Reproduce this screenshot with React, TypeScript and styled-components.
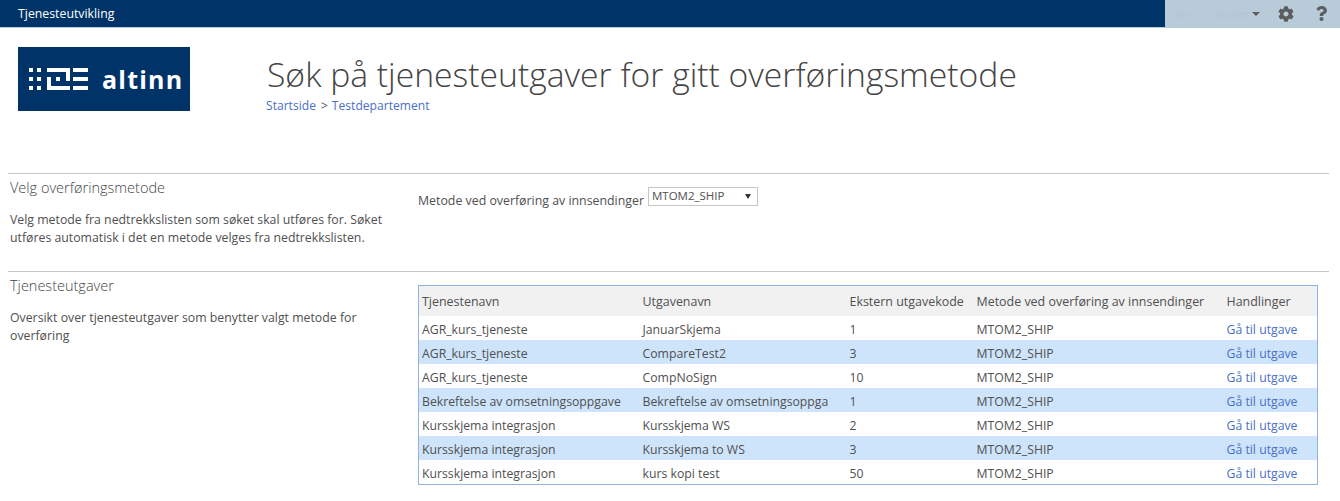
import React from 'react';
import styled, { createGlobalStyle } from 'styled-components';
import { FaCog, FaQuestion } from 'react-icons/fa';

const navy = '#003468';
const text = '#505050';
const link = '#4a6fc8';

interface Row {
  service: string;
  edition: string;
  code: string;
}

const rows: Row[] = [
  { service: 'AGR_kurs_tjeneste', edition: 'JanuarSkjema', code: '1' },
  { service: 'AGR_kurs_tjeneste', edition: 'CompareTest2', code: '3' },
  { service: 'AGR_kurs_tjeneste', edition: 'CompNoSign', code: '10' },
  { service: 'Bekreftelse av omsetningsoppgave', edition: 'Bekreftelse av omsetningsoppga', code: '1' },
  { service: 'Kursskjema integrasjon', edition: 'Kursskjema WS', code: '2' },
  { service: 'Kursskjema integrasjon', edition: 'Kursskjema to WS', code: '3' },
  { service: 'Kursskjema integrasjon', edition: 'kurs kopi test', code: '50' },
];

const App: React.FunctionComponent = () => (
  <Page>
    <GlobalStyle />
    <TopBar>
      <SiteName>Tjenesteutvikling</SiteName>
      <UserPanel>
        <UserName>Nn</UserName>
        <UserName>Bruker</UserName>
        <Caret />
        <FaCog size={16} />
        <FaQuestion size={15} />
      </UserPanel>
    </TopBar>
    <Header>
      <Logo>
        <svg width="59" height="22" viewBox="0 0 59 22" fill="#fff">
          <rect x="0" y="0" width="4" height="4" />
          <rect x="8" y="0" width="4" height="4" />
          <rect x="0" y="9" width="4" height="4" />
          <rect x="8" y="9" width="4" height="4" />
          <rect x="0" y="18" width="4" height="4" />
          <rect x="8" y="18" width="4" height="4" />
          <path d="M18 0h23v13h-4V4H18z" />
          <path d="M18 9h4v9h19v4H18z" />
          <rect x="27" y="9" width="4" height="4" />
          <rect x="44" y="0" width="15" height="4" />
          <rect x="44" y="9" width="15" height="4" />
          <rect x="44" y="18" width="15" height="4" />
        </svg>
        <LogoText>altinn</LogoText>
      </Logo>
      <TitleBlock>
        <Title>Søk på tjenesteutgaver for gitt overføringsmetode</Title>
        <Breadcrumb>
          <a href="#start">Startside</a>
          <Separator>&gt;</Separator>
          <a href="#dep">Testdepartement</a>
        </Breadcrumb>
      </TitleBlock>
    </Header>
    <Section>
      <Intro>
        <SectionTitle>Velg overføringsmetode</SectionTitle>
        <Description>
          Velg metode fra nedtrekkslisten som søket skal utføres for. Søket
          utføres automatisk i det en metode velges fra nedtrekkslisten.
        </Description>
      </Intro>
      <Body>
        <Field>
          Metode ved overføring av innsendinger
          <Select>
            MTOM2_SHIP
            <SelectArrow />
          </Select>
        </Field>
      </Body>
    </Section>
    <ResultSection>
      <Intro>
        <SectionTitle>Tjenesteutgaver</SectionTitle>
        <Description>
          Oversikt over tjenesteutgaver som benytter valgt metode for overføring
        </Description>
      </Intro>
      <Body>
        <Table>
          <colgroup>
            <col width="221" />
            <col width="207" />
            <col width="127" />
            <col width="250" />
            <col />
          </colgroup>
          <thead>
            <tr>
              <th>Tjenestenavn</th>
              <th>Utgavenavn</th>
              <th>Ekstern utgavekode</th>
              <th>Metode ved overføring av innsendinger</th>
              <th>Handlinger</th>
            </tr>
          </thead>
          <tbody>
            {rows.map((row, i) => (
              <BodyRow key={i} $striped={i % 2 === 1}>
                <td>{row.service}</td>
                <td>{row.edition}</td>
                <td>{row.code}</td>
                <td>MTOM2_SHIP</td>
                <td>
                  <a href="#utgave">Gå til utgave</a>
                </td>
              </BodyRow>
            ))}
          </tbody>
        </Table>
      </Body>
    </ResultSection>
  </Page>
);

const GlobalStyle = createGlobalStyle`
  html, body {
    margin: 0;
    padding: 0;
    background: #fff;
    overflow: hidden;
  }
  a {
    color: ${link};
    text-decoration: none;
  }
`;

const Page = styled.div`
  width: 1340px;
  height: 501px;
  overflow: hidden;
  font-family: 'Open Sans', 'Noto Sans', sans-serif;
  font-size: 12.3px;
  color: ${text};
`;

const TopBar = styled.div`
  display: flex;
  justify-content: space-between;
  height: 27px;
  background: ${navy};
  border-bottom: 1px solid #b7cbd8;
`;

const SiteName = styled.div`
  padding-left: 18px;
  font-size: 12.3px;
  line-height: 27px;
  color: #fff;
`;

const UserPanel = styled.div`
  display: flex;
  align-items: center;
  width: 175px;
  padding-left: 11px;
  box-sizing: border-box;
  background: #b7cbd8;
  color: #5d5d5d;

  svg + svg {
    margin-left: 20px;
  }
`;

const UserName = styled.span`
  margin-right: 24px;
  font-size: 11px;
  color: #b3c7d5;

  & + & {
    margin-right: 0;
    width: 35px;
  }
`;

const Caret = styled.span`
  width: 0;
  height: 0;
  margin: 0 18px 0 2px;
  border-left: 4px solid transparent;
  border-right: 4px solid transparent;
  border-top: 4px solid #5d5d5d;
`;

const Header = styled.div`
  display: flex;
  height: 145px;
  padding: 19px 0 0 18px;
  box-sizing: border-box;
`;

const Logo = styled.div`
  display: flex;
  align-items: center;
  gap: 14px;
  width: 172px;
  height: 64px;
  padding-left: 11px;
  box-sizing: border-box;
  background: ${navy};
`;

const LogoText = styled.span`
  font-size: 25px;
  font-weight: 700;
  letter-spacing: 1.2px;
  line-height: 1;
  color: #fff;
`;

const TitleBlock = styled.div`
  margin-left: 76px;
`;

const Title = styled.h1`
  margin: 0;
  padding-top: 3px;
  padding-left: 1px;
  font-size: 33.7px;
  font-weight: 300;
  line-height: 48px;
  white-space: nowrap;
  color: #444;
`;

const Breadcrumb = styled.div`
  margin-top: -1px;
  font-size: 12.1px;
  line-height: 17px;
`;

const Separator = styled.span`
  margin: 0 4px 0 5px;
`;

const Section = styled.div`
  display: flex;
  height: 98px;
  width: 1321px;
  margin-left: 8px;
  border-top: 1px solid #c6c6c6;
  box-sizing: border-box;
`;

const ResultSection = styled(Section)`
  height: 220px;
`;

const Intro = styled.div`
  width: 410px;
  padding: 4px 28px 0 2px;
  box-sizing: border-box;
  flex-shrink: 0;
`;

const SectionTitle = styled.h2`
  margin: 0;
  font-size: 14.5px;
  font-weight: 300;
  line-height: 20px;
  color: #444;
`;

const Description = styled.p`
  margin: 13px 0 0;
  line-height: 18px;
`;

const Body = styled.div`
  flex: 1;
  min-width: 0;
  padding-top: 13px;
`;

const Field = styled.div`
  display: flex;
  align-items: flex-start;
  font-size: 12.35px;
  line-height: 28px;
  white-space: nowrap;
`;

const Select = styled.div`
  position: relative;
  width: 110px;
  height: 19px;
  margin-left: 4px;
  padding-left: 3px;
  box-sizing: border-box;
  border: 1px solid #c6c6c6;
  font-size: 11.5px;
  line-height: 16px;
`;

const SelectArrow = styled.span`
  position: absolute;
  right: 6px;
  top: 6px;
  border-left: 3px solid transparent;
  border-right: 3px solid transparent;
  border-top: 5px solid #333;
`;

const Table = styled.table`
  width: 900px;
  border: 1px solid #92b4e2;
  border-collapse: collapse;
  table-layout: fixed;

  th {
    height: 30px;
    padding: 0 3px;
    background: #f1f1f1;
    font-size: 12.45px;
    font-weight: 400;
    text-align: left;
    white-space: nowrap;
  }
  td {
    height: 24px;
    padding: 5px 3px 1px;
    box-sizing: border-box;
    font-size: 12.25px;
    line-height: 18px;
    white-space: nowrap;
    overflow: hidden;
  }
`;

const BodyRow = styled.tr<{ $striped: boolean }>`
  background: ${({ $striped }) => ($striped ? '#cde4fb' : '#fff')};
`;

export default App;
